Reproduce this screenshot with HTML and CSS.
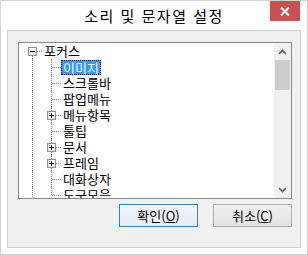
FILE: index.html
```html
<!DOCTYPE html>
<html lang="ko">
  <head>
    <meta charset="UTF-8" />
    <title>소리 및 문자열 설정</title>
    <link rel="stylesheet" href="styles.css">
  </head>
  <body>
    <div class="window">
      <div class="titlebar">
        <span></span>
        <span class="title">소리 및 문자열 설정</span>
        <div class="close">
          <svg width="10" height="9" viewBox="0 0 10 9">
            <path d="M1 0.5 L9 8.5 M9 0.5 L1 8.5" stroke="#fff" stroke-width="2" fill="none" />
          </svg>
        </div>
      </div>

      <div class="client">
        <div class="tree">
          <div class="tree-body">
            <div class="row"><span class="knot first"><i class="box minus"></i></span><span class="label">포커스</span></div>
            <div class="row"><span class="ind"></span><span class="knot"></span><span class="label sel">이미지</span></div>
            <div class="row"><span class="ind"></span><span class="knot"></span><span class="label">스크롤바</span></div>
            <div class="row"><span class="ind"></span><span class="knot"></span><span class="label">팝업메뉴</span></div>
            <div class="row"><span class="ind"></span><span class="knot"><i class="box plus"></i></span><span class="label">메뉴항목</span></div>
            <div class="row"><span class="ind"></span><span class="knot"></span><span class="label">툴팁</span></div>
            <div class="row"><span class="ind"></span><span class="knot"><i class="box plus"></i></span><span class="label">문서</span></div>
            <div class="row"><span class="ind"></span><span class="knot"><i class="box plus"></i></span><span class="label">프레임</span></div>
            <div class="row"><span class="ind"></span><span class="knot"></span><span class="label">대화상자</span></div>
            <div class="row"><span class="ind"></span><span class="knot last"></span><span class="label">도구모음</span></div>
            <div class="row"><span class="ind"></span></div>
          </div>

          <div class="vscroll">
            <div class="arrow">
              <svg width="9" height="6" viewBox="0 0 9 6"><path d="M1 5 L4.5 1.5 L8 5" stroke="#606060" stroke-width="1.6" fill="none" /></svg>
            </div>
            <div class="track"><div class="thumb"></div></div>
            <div class="arrow">
              <svg width="9" height="6" viewBox="0 0 9 6"><path d="M1 1 L4.5 4.5 L8 1" stroke="#606060" stroke-width="1.6" fill="none" /></svg>
            </div>
          </div>
        </div>

        <div class="buttons">
          <button class="btn default">확인(<u>O</u>)</button>
          <button class="btn">취소(<u>C</u>)</button>
        </div>
      </div>
    </div>
  </body>
</html>
```

FILE: styles.css
```css
body {
  margin: 0;
  font-family: "Noto Sans CJK KR", "Noto Sans", sans-serif;
}

.window {
  box-sizing: border-box;
  width: 308px;
  height: 255px;
  border: 1px solid #d4d4d4;
  background: #fff;
  display: flex;
  flex-direction: column;
}

.titlebar {
  height: 29px;
  display: grid;
  grid-template-columns: 1fr auto 1fr;
  align-items: center;
}
.title {
  font-size: 15px;
  letter-spacing: 1.5px;
  color: #000;
  line-height: 20px;
}
.close {
  justify-self: end;
  align-self: start;
  width: 30px;
  height: 20px;
  margin-right: 7px;
  background: #c75050;
  display: flex;
  align-items: center;
  justify-content: center;
}

.client {
  flex: 1;
  margin: 0 6px 6px;
  border: 1px solid #cfcfcf;
  background: #f0f0f0;
  display: flex;
  flex-direction: column;
}

.tree {
  height: 157px;
  box-sizing: border-box;
  margin: 11px 8px 0 10px;
  border: 1px solid #828790;
  background: #fff;
  display: flex;
}
.tree-body {
  flex: 1;
  overflow: hidden;
}

.row {
  height: 16px;
  display: flex;
}
.ind,
.knot {
  position: relative;
  flex: none;
}
.ind {
  width: 19px;
}
.knot {
  width: 23px;
}
.ind::before,
.knot::before {
  content: "";
  position: absolute;
  left: 13px;
  top: 0;
  bottom: 0;
  border-left: 1px dotted #8a8a8a;
}
.knot::after {
  content: "";
  position: absolute;
  left: 14px;
  right: 0;
  top: 8px;
  border-top: 1px dotted #8a8a8a;
}
.knot.first::before {
  top: 8px;
}
.knot.last::before {
  bottom: 8px;
}

.box {
  position: absolute;
  left: 9px;
  top: 4px;
  width: 7px;
  height: 7px;
  border: 1px solid #919191;
  background: linear-gradient(#fff, #e4e4e4);
  z-index: 1;
}
.box::before {
  content: "";
  position: absolute;
  left: 1px;
  top: 3px;
  width: 5px;
  height: 1px;
  background: #1c1c1c;
}
.box.plus::after {
  content: "";
  position: absolute;
  left: 3px;
  top: 1px;
  width: 1px;
  height: 5px;
  background: #1c1c1c;
}

.label {
  height: 15px;
  line-height: 15px;
  padding: 0 2px;
  font-size: 13px;
  color: #000;
  white-space: nowrap;
}
.label.sel {
  box-sizing: border-box;
  background: #3399ff;
  color: #fff;
  outline: 1px dotted #000;
  outline-offset: -1px;
  margin-top: 1px;
}

.vscroll {
  width: 17px;
  background: #f0f0f0;
  display: flex;
  flex-direction: column;
}
.arrow {
  height: 17px;
  display: flex;
  align-items: center;
  justify-content: center;
}
.track {
  flex: 1;
}
.thumb {
  height: 30px;
  margin: 0 1px;
  background: #cdcdcd;
}

.buttons {
  display: flex;
  justify-content: flex-end;
  gap: 15px;
  margin: 5px 8px 0 0;
}
.btn {
  width: 79px;
  height: 23px;
  padding: 0;
  border: 1px solid #adadad;
  background: linear-gradient(#efefef, #e3e3e3);
  font-family: "Noto Sans CJK KR", "Noto Sans", sans-serif;
  font-size: 13px;
  color: #000;
}
.btn.default {
  border-color: #3c7fb1;
  background: linear-gradient(#f0f4f9, #e6edf5);
}
.btn u {
  text-underline-offset: 1px;
}
```
